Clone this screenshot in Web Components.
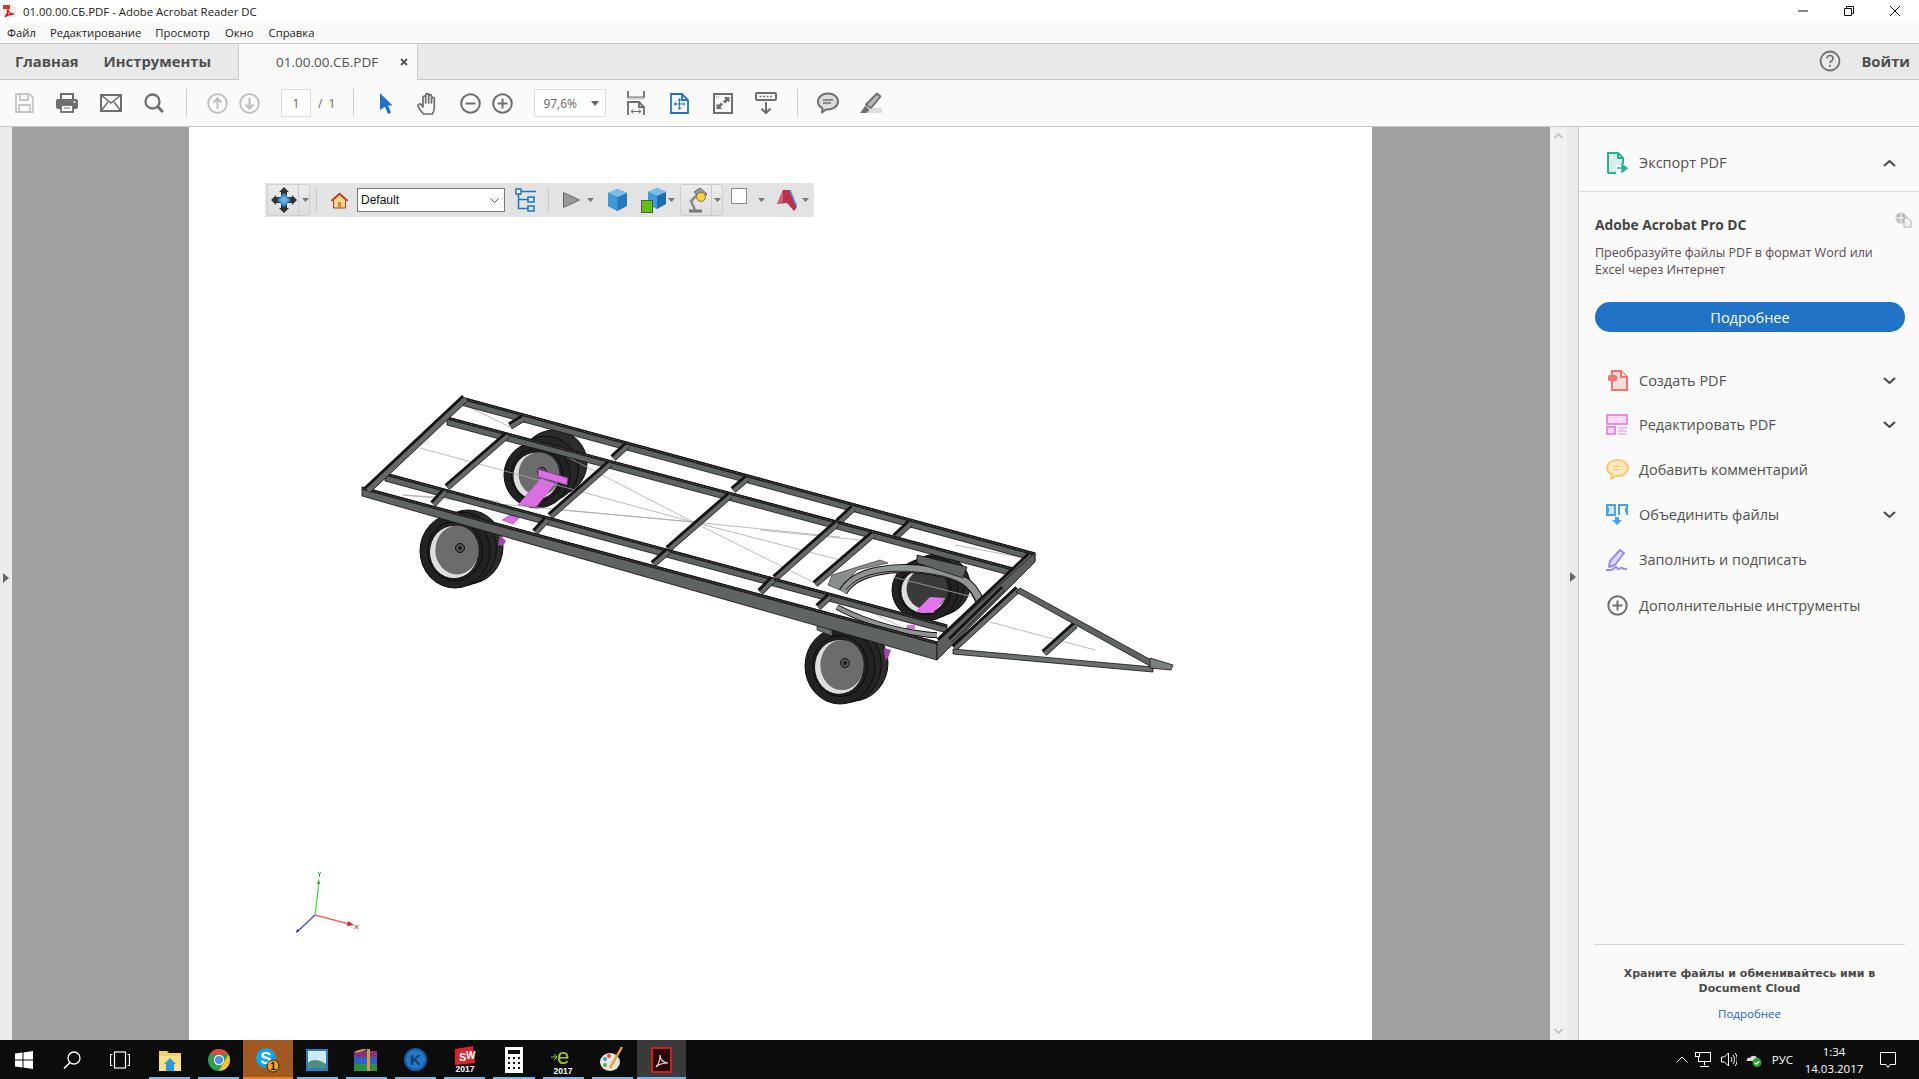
<!DOCTYPE html>
<html lang="ru">
<head>
<meta charset="utf-8">
<title>01.00.00.СБ.PDF - Adobe Acrobat Reader DC</title>
<style>
  html, body { margin: 0; height: 100%; overflow: hidden; }
  body { font-family: "Open Sans", "Noto Sans", sans-serif; color: #4b4b4b; background: #fff; }
  acro-app { width: 1919px; height: 1079px; }
</style>
</head>
<body>
<acro-app></acro-app>
<script>
// small helper, every component is just a template string in a shadow root
function define(name, css, html, init) {
    customElements.define(name, class extends HTMLElement {
        constructor() {
            super();
            this.attachShadow({ mode: 'open' });
            this.shadowRoot.innerHTML = `<style>${css}</style>${typeof html === 'function' ? html(this) : html}`;
            if (init) init(this);
        }
    });
}

define('app-titlebar', `
    :host { display: flex; align-items: center; height: 22px; background: #fff; font-size: 11.400px; color: #222; padding-left: 3px; }
    svg { display: block; }
    .t { margin-left: 7px; flex: 1; }
    .b { width: 46px; display: flex; justify-content: center; }
`, `
    <svg width="13" height="14" viewBox="0 0 13 14"><path d="M0 1h9l4 3v9H0z" fill="#ececec"/><rect x="0" y="1" width="7" height="4" fill="#d0362c"/><path d="M2 13c2-2 3-6 3-8 0 3 2 5 6 5-3 0-7 1-9 3z" fill="none" stroke="#d0201c" stroke-width="1.4"/></svg>
    <span class="t">01.00.00.СБ.PDF - Adobe Acrobat Reader DC</span>
    <span class="b"><svg width="10" height="10"><path d="M0 5h10" stroke="#111"/></svg></span>
    <span class="b"><svg width="10" height="10"><path d="M2.500 2.500V.5h7v7h-2M.5 2.500h7v7h-7z" fill="none" stroke="#111"/></svg></span>
    <span class="b" style="margin-right:1px"><svg width="10" height="10"><path d="M0 0l10 10M10 0L0 10" stroke="#111"/></svg></span>
`);

define('app-menubar', `
    :host { display: flex; align-items: center; gap: 14px; height: 21px; background: #fafafa; font-size: 11.300px; color: #222; padding-left: 7px; box-sizing: border-box; }
`, `<span>Файл</span><span>Редактирование</span><span>Просмотр</span><span style="margin-left:1px">Окно</span><span style="margin-left:1px">Справка</span>`);

define('app-tabs', `
    :host { display: flex; background: #e9e9e9; border-top: 1px solid #c8c8c8; border-bottom: 1px solid #c8c8c8; box-sizing: content-box; height: 35px; font-size: 14.800px; color: #4f4f4f; }
    .nav { display: flex; align-items: center; width: 238px; padding: 0 0 2px 15px; gap: 25px; box-sizing: border-box; font-weight: 700; }
    .tab { display: flex; align-items: center; width: 180px; height: 36px; background: #fafafa; border-left: 1px solid #c8c8c8; border-right: 1px solid #c8c8c8; box-sizing: border-box; padding-left: 37px; font-size: 13.500px; margin-bottom: -1px; color: #505050; }
    .tab svg { margin-left: 22px; }
    .right { margin-left: auto; display: flex; align-items: center; padding: 0 9px 2px 0; gap: 20px; font-weight: 700; }
`, `
    <div class="nav"><span>Главная</span><span>Инструменты</span></div>
    <div class="tab"><span>01.00.00.СБ.PDF</span><svg width="8" height="8"><path d="M1 1l6 6M7 1L1 7" stroke="#555" stroke-width="1.800"/></svg></div>
    <div class="right">
      <svg width="22" height="22" viewBox="0 0 22 22"><circle cx="11" cy="11" r="9.500" fill="none" stroke="#707070" stroke-width="1.800"/><path d="M8 8.500c0-4 6-4 6 0 0 2.500-3 2.500-3 4.500" fill="none" stroke="#707070" stroke-width="1.700"/><circle cx="11" cy="15.800" r="1.100" fill="#707070"/></svg>
      <span>Войти</span>
    </div>
`);

const G = '#6e6e6e';
define('app-toolbar', `
    :host { display: flex; align-items: center; height: 46px; background: #fafafa; border-bottom: 1px solid #c8c8c8; padding-left: 15px; font-size: 12px; color: #666; }
    svg { display: block; flex: none; }
    .sep { width: 1px; height: 28px; background: #cfcfcf; flex: none; }
    .box { display: flex; align-items: center; height: 28px; background: #fff; border: 1px solid #dcdcdc; box-sizing: border-box; flex: none; }
`, `
    <svg width="19" height="20" viewBox="0 0 19 20"><path d="M1 1h13.500L18 4.500V19H1z" fill="none" stroke="#c6c6c6" stroke-width="1.800"/><path d="M5 1v6h8V1M4 19v-7h11v7" fill="none" stroke="#c6c6c6" stroke-width="1.800"/></svg>
    <svg style="margin-left:22px" width="22" height="20" viewBox="0 0 22 20"><path d="M5 7V1h12v6" fill="none" stroke="${G}" stroke-width="2"/><rect y="6" width="22" height="10" rx="2" fill="${G}"/><rect x="5" y="12" width="12" height="7" fill="#fff" stroke="${G}" stroke-width="1.800"/><path d="M8 15h6" stroke="${G}"/><circle cx="18.500" cy="9" r="1" fill="#fff"/></svg>
    <svg style="margin-left:22px" width="22" height="18" viewBox="0 0 22 18"><rect x="1" y="1" width="20" height="16" fill="none" stroke="${G}" stroke-width="2"/><path d="M1 1l10 8 10-8M1 17l7-9M21 17l-7-9" fill="none" stroke="${G}" stroke-width="1.500"/></svg>
    <svg style="margin-left:22px" width="20" height="20" viewBox="0 0 20 20"><circle cx="8.500" cy="8.500" r="7" fill="none" stroke="${G}" stroke-width="2.300"/><path d="M13.500 13.500l5.500 5.500" stroke="${G}" stroke-width="3"/></svg>
    <div class="sep" style="margin-left:22px"></div>
    <svg style="margin-left:20px" width="21" height="21" viewBox="0 0 21 21"><circle cx="10.500" cy="10.500" r="9.300" fill="none" stroke="#bdbdbd" stroke-width="1.800"/><path d="M10.500 16V6M6.500 9.500l4-4 4 4" fill="none" stroke="#bdbdbd" stroke-width="2"/></svg>
    <svg style="margin-left:11px" width="21" height="21" viewBox="0 0 21 21"><circle cx="10.500" cy="10.500" r="9.300" fill="none" stroke="#bdbdbd" stroke-width="1.800"/><path d="M10.500 5v10M6.500 11.500l4 4 4-4" fill="none" stroke="#bdbdbd" stroke-width="2"/></svg>
    <div class="box" style="margin-left:21px;width:30px;justify-content:center;">1</div>
    <span style="margin-left:7px;word-spacing:3px;">/ 1</span>
    <div class="sep" style="margin-left:18px"></div>
    <svg style="margin-left:26px" width="13" height="21" viewBox="0 0 13 21"><path d="M0 0l12.500 12.500H8l3 7-3 1.500-3-7.200L0 17z" fill="#1f72c9"/></svg>
    <svg style="margin-left:24px" width="23" height="23" viewBox="0 0 23 23"><path d="M6.500 22C4.500 19.500 1 15.500 1 13.500c0-1.800 2.200-2 3.200-.7L6 15V5.500c0-2 2.700-2 2.700 0V11 3.200c0-2 3-2 3 0V11 4.200c0-2 2.800-2 2.800 0V11 6.800c0-2 2.800-2 2.800 0V16c0 3-1 4.500-2 6z" fill="#fafafa" stroke="${G}" stroke-width="1.700" stroke-linejoin="round"/></svg>
    <svg style="margin-left:20px" width="21" height="21" viewBox="0 0 21 21"><circle cx="10.500" cy="10.500" r="9.300" fill="none" stroke="${G}" stroke-width="2"/><path d="M5.500 10.500h10" stroke="${G}" stroke-width="2"/></svg>
    <svg style="margin-left:11px" width="21" height="21" viewBox="0 0 21 21"><circle cx="10.500" cy="10.500" r="9.300" fill="none" stroke="${G}" stroke-width="2"/><path d="M5.500 10.500h10M10.500 5.500v10" stroke="${G}" stroke-width="2"/></svg>
    <div class="box" style="margin-left:21px;width:72px;padding-left:8px;gap:14px;">97,6%<svg width="8" height="5"><path d="M0 0h8L4 5z" fill="#666"/></svg></div>
    <svg style="margin-left:21px" width="18" height="24" viewBox="0 0 18 24"><path d="M1 0v6.500h16V0" fill="none" stroke="${G}" stroke-width="1.800"/><path d="M0 7.500h18" stroke="#cfcfcf" stroke-width="2"/><path d="M1 24V11h11l5 5v8M12 11v5h5" fill="none" stroke="${G}" stroke-width="1.800"/><path d="M4 20.500h10M4 20.500l2.500-2M4 20.500l2.500 2M14 20.500l-2.500-2M14 20.500l-2.500 2" stroke="${G}" fill="none"/></svg>
    <svg style="margin-left:25px" width="19" height="21" viewBox="0 0 19 21"><path d="M1 1h11l6 6v13H1zM12 1v6h6" fill="none" stroke="#1f72c9" stroke-width="1.800"/><path d="M9.500 5l2 2.500h-4zM9.500 17l2-2.500h-4zM3.500 11l2.500-2v4zM15.500 11L13 9v4z M9 7h1v8H9zM5 10.500h9v1H5z" fill="#1f72c9"/></svg>
    <svg style="margin-left:24px" width="20" height="21" viewBox="0 0 20 21"><rect x="1" y="1" width="18" height="19" fill="none" stroke="${G}" stroke-width="2"/><path d="M3 4h4" stroke="${G}" stroke-dasharray="1 1"/><path d="M11 4h5.500v5.500l-2-1.500-2.500 2.500-2-2L12.500 6zM9 16H3.500v-5.500l2 1.500L8 9.500l2 2L7.500 14z" fill="${G}"/></svg>
    <svg style="margin-left:22px" width="22" height="23" viewBox="0 0 22 23"><rect x="1" y="1" width="20" height="7" rx="1" fill="none" stroke="${G}" stroke-width="2"/><path d="M4.500 4.500h13" stroke="${G}" stroke-width="1.600" stroke-dasharray="2 1.500"/><path d="M11 10v11M6.500 16.500L11 21l4.500-4.500" fill="none" stroke="${G}" stroke-width="2"/></svg>
    <div class="sep" style="margin-left:20px"></div>
    <svg style="margin-left:19px" width="22" height="22" viewBox="0 0 22 22"><path d="M11 1.500c5.500 0 10 3.300 10 8s-4.500 8-10 8h-2l-4 3 .5-4.200C3 15 1 12.500 1 9.500c0-4.700 4.500-8 10-8z" fill="#dcdcdc" stroke="${G}" stroke-width="2" stroke-linejoin="round"/><path d="M6 8h10M6 11h8" stroke="${G}" stroke-width="1.500"/></svg>
    <svg style="margin-left:21px" width="22" height="22" viewBox="0 0 22 22"><rect x="4" y="16" width="18" height="5" fill="#dcdcdc"/><path d="M17 1.500l3.500 3L11 16l-5-3.500z" fill="#b9b9b9" stroke="${G}" stroke-width="1.800" stroke-linejoin="round"/><path d="M5.500 13.500L0 21h6.500l3-3z" fill="${G}"/></svg>
`);

// 3D toolbar that floats over the page
define('view3d-toolbar', `
    :host { position: absolute; left: 76px; top: 56px; display: flex; align-items: center; width: 549px; height: 34px; background: #e3e3e3; box-sizing: border-box; padding-left: 2px; font: 12px "Liberation Sans", sans-serif; color: #111; }
    svg { display: block; flex: none; }
    .tog { display: flex; align-items: center; height: 32px; border: 1px solid #cdcdcd; border-radius: 3px; background: linear-gradient(#ececec, #dedede); box-sizing: border-box; flex: none; }
    .tog i { width: 1px; height: 30px; background: #cdcdcd; flex: none; }
    .sep { width: 1px; height: 24px; background: #c6c6c6; flex: none; }
    .sel { display: flex; align-items: center; justify-content: space-between; width: 148px; height: 24px; background: #fff; border: 1px solid #777; box-sizing: border-box; padding: 0 5px 0 3px; margin-left: 9px; flex: none; }
`, () => {
    const arr = (m) => `<svg style="margin-left:${m}px" width="7" height="4"><path d="M0 0h7L3.500 4z" fill="#777"/></svg>`;
    return `
    <div class="tog" style="width:43px;padding-left:3px;">
      <svg width="26" height="26" viewBox="0 0 26 26"><path d="M13 0l5 5-2 0v4l-3 3-3-3V5H8z" fill="#333"/><path d="M13 26l5-5h-2v-4l-3-3-3 3v4H8z" fill="#333"/><path d="M0 13l5-5v2h4l3 3-3 3H5v2z" fill="#333"/><path d="M26 13l-5-5v2h-4l-3 3 3 3h4v2z" fill="#333"/><path d="M13 6l7 7-7 7-7-7z" fill="#3b8fd0"/><path d="M13 9l4 4-4 4-4-4z" fill="#6cb5e8"/></svg>
      <i style="margin-left:1px"></i>${arr(3)}
    </div>
    <div class="sep" style="margin-left:6px"></div>
    <svg style="margin-left:14px" width="17" height="17" viewBox="0 0 17 17"><path d="M8.500 1L0 8.500h2.500V16h12V8.500H17z" fill="#f6d488" stroke="#a33a2c" stroke-linejoin="round"/><path d="M8.500 1L0 8.500h2.500l6-5.500 6 5.500H17z" fill="#b8402e"/><rect x="7" y="10" width="3" height="6" fill="#c98a3c"/></svg>
    <div class="sel"><span>Default</span><svg width="9" height="5"><path d="M.5.500l4 4 4-4" fill="none" stroke="#555"/></svg></div>
    <svg style="margin-left:10px" width="22" height="24" viewBox="0 0 22 24" fill="none" stroke="#1f76bd" stroke-width="1.500"><rect x="1" y="1" width="5" height="5" fill="#fff"/><rect x="13" y="9" width="6" height="5" fill="#cfe5f6"/><rect x="13" y="18" width="6" height="5" fill="#cfe5f6"/><path d="M6 3.500h15M3.500 6v14.500H13M3.500 11.500H13"/></svg>
    <div class="sep" style="margin-left:11px"></div>
    <svg style="margin-left:14px" width="17" height="16" viewBox="0 0 17 16"><path d="M.5.500L16.500 8 .5 15.500z" fill="#999" stroke="#666"/></svg>${arr(7)}
    <svg style="margin-left:14px" width="19" height="22" viewBox="0 0 19 22"><path d="M9.500 0L19 4v13l-9.500 5L0 17V4z" fill="#2a78bc"/><path d="M9.500 0L19 4l-9.500 4L0 4z" fill="#7cc0ea"/><path d="M0 4l9.500 4v14L0 17z" fill="#3f9ad8"/></svg>
    <svg style="margin-left:14px" width="25" height="25" viewBox="0 0 25 25"><path d="M16 0l9 4v12l-9 5-9-5V4z" fill="#1f6cae"/><path d="M16 0l9 4-9 4-9-4z" fill="#7cc0ea"/><path d="M7 4l9 4v13l-9-5z" fill="#3f9ad8"/><rect x=".5" y="12.500" width="11" height="12" fill="#66c000" stroke="#555"/></svg>${arr(2)}
    <div class="tog" style="width:43px;margin-left:5px;padding-left:5px;">
      <svg width="22" height="26" viewBox="0 0 22 26"><path d="M3 24h13" stroke="#777" stroke-width="3"/><path d="M9 23L5 14l7-7" fill="none" stroke="#888" stroke-width="2.500"/><path d="M8 5l6-4 7 6-5 5z" fill="#9a9a9a" stroke="#666"/><circle cx="15" cy="10" r="4.500" fill="#f4d24a" stroke="#8b7a20"/></svg>
      <i style="margin-left:3px"></i>${arr(2)}
    </div>
    <svg style="margin-left:8px;align-self:flex-start;margin-top:5px" width="16" height="16"><rect x=".5" y=".5" width="15" height="15" fill="#fff" stroke="#8a8a8a"/></svg>${arr(11)}
    <svg style="margin-left:12px" width="20" height="22" viewBox="0 0 20 22"><path d="M6 1h7l7 17-3 4-7-8-10 1z" fill="#b8324e"/><path d="M0 15L6 1v12z" fill="#d4607a"/><path d="M13 1l7 17" stroke="#4aa3e0" stroke-width="1.500"/></svg>${arr(5)}
    `;
});

// trailer drawing, coordinates are screen pixels traced off the reference
define('trailer-model', `
    :host { position: absolute; inset: 0; display: block; }
    svg { display: block; position: absolute; left: 0; top: 0; }
`, () => {
    const wheel = (cx, cy, rx, ry, dx, dy, noHub) => `
        <ellipse cx="${cx + dx}" cy="${cy + dy}" rx="${rx}" ry="${ry}" fill="#2c2c2c" stroke="#0c0c0c"/>
        <ellipse cx="${cx + dx * .5}" cy="${cy + dy * .5}" rx="${rx}" ry="${ry}" fill="#252525" stroke="#0c0c0c"/>
        <ellipse cx="${cx}" cy="${cy}" rx="${rx}" ry="${ry}" fill="#222" stroke="#0c0c0c"/>
        <ellipse cx="${cx}" cy="${cy}" rx="${rx * .78}" ry="${ry * .8}" fill="none" stroke="#0a0a0a"/>
        <ellipse cx="${cx - 1}" cy="${cy + 1}" rx="${rx * .7}" ry="${ry * .72}" fill="#dedede" stroke="#111"/>
        <ellipse cx="${cx + 2}" cy="${cy - 1}" rx="${rx * .62}" ry="${ry * .66}" fill="${noHub ? '#3a3a3a' : '#6c6c6c'}"/>
        ${noHub ? '' : `<circle cx="${cx + 5}" cy="${cy - 3}" r="4.500" fill="#555" stroke="#111"/><circle cx="${cx + 5}" cy="${cy - 3}" r="2" fill="#222"/>`}`;
    // long rail: dark dotted top edge, grey side face
    const rail = (x1, y1, x2, y2, h1, h2) => `
        <polygon points="${x1},${y1} ${x2},${y2} ${x2},${y2 + (h2 || h1)} ${x1},${y1 + h1}" fill="#5f6361" stroke="#111" stroke-width=".8"/>
        <line x1="${x1}" y1="${y1 + 1}" x2="${x2}" y2="${y2 + 1}" stroke="#171717" stroke-width="3"/>
        <line x1="${x1}" y1="${y1 + 1}" x2="${x2}" y2="${y2 + 1}" stroke="#6f6f6f" stroke-width="1" stroke-dasharray="1 1.500"/>`;
    const cross = (x1, y1, x2, y2, w) => `
        <line x1="${x1}" y1="${y1}" x2="${x2}" y2="${y2}" stroke="#141414" stroke-width="${w + 1.500}"/>
        <line x1="${x1 + .8}" y1="${y1 + .8}" x2="${x2 + .8}" y2="${y2 + .8}" stroke="#656967" stroke-width="${w - 2}"/>`;
    const thin = (p) => p.map(a => `<line x1="${a[0]}" y1="${a[1]}" x2="${a[2]}" y2="${a[3]}"/>`).join('');
    const short1 = [[523,418,510,426],[627,445,613,458],[747,478,733,490],[853,508,838,522],[910,523,895,537]];
    const long = [[507,435,447,487],[610,463,550,516],[730,495,668,549],[837,523,775,578],[873,534,815,584]];
    const short2 = [[445,491,433,504],[547,519,535,532],[668,551,653,564],[773,579,760,592],[830,596,818,607]];
    return `<svg width="1183" height="913" viewBox="189 127 1183 913">
      ${wheel(537, 475, 33, 33, 17, -12)}
      ${wheel(925, 590, 33, 31, 12, -5, true)}
      <polygon points="541,478 555,484 536,507 518,505" fill="#d96fe3" stroke="#a548ae" stroke-width=".6"/>
      <polygon points="538,469 568,478 567,485 538,477" fill="#d96fe3" stroke="#7b3182" stroke-width=".8"/>
      <polygon points="502,520 510,515 520,517 513,524" fill="#d96fe3" stroke="#a548ae" stroke-width=".6"/>
      <polygon points="915,612 930,597 945,598 933,613" fill="#e374ee"/>
      <polygon points="907,625 915,625 915,629 906,629" fill="#d96fe3"/>
      ${wheel(455, 551, 35, 37, 13, -4)}
      <polygon points="500,535 506,541 503,546 498,545" fill="#a844b0"/>
      ${wheel(840, 666, 35, 38, 13, -3)}
      <polygon points="884,648 891,650 888,658 885,660" fill="#a844b0"/>
      <polygon points="832,575 880,560 888,563 857,570 840,590 828,585" fill="#8a8e8c" stroke="#222" stroke-width=".6"/>
      <path d="M843 592C855 570 895 565 933 571S975 590 982 606" fill="none" stroke="#111" stroke-width="9"/>
      <path d="M843 592C855 570 895 565 933 571S975 590 982 606" fill="none" stroke="#8f9392" stroke-width="7"/>
      <path d="M846 590C860 571 895 568 932 574S970 591 979 606" fill="none" stroke="#222" stroke-width="1"/>
      <polygon points="917,555 967,567 963,578 917,563" fill="#5f6361" stroke="#111" stroke-width=".8"/>
      <path d="M837 607C855 617 885 628 910 632S930 635 937 635" fill="none" stroke="#111" stroke-width="6"/>
      <path d="M837 607C855 617 885 628 910 632S930 635 937 635" fill="none" stroke="#8f9392" stroke-width="4"/>
      <polygon points="817,618 832,625 832,636 817,630" fill="#6b6f6d" stroke="#111" stroke-width=".6"/>
      <g stroke="#a9a9a9" stroke-width=".8">${thin([[420,448,693,522],[550,448,693,522],[403,495,693,522],[562,510,693,522],[693,522,840,537],[693,522,840,560],[693,522,813,582],[760,530,860,540],[990,622,1095,650],[853,603,903,628],[893,577,973,597],[465,405,510,427],[403,495,435,497],[460,495,500,502],[955,545,1025,558]])}</g>
      ${rail(461, 397, 1035, 553, 8)}
      ${short1.map(a => cross(...a, 6)).join('')}
      ${rail(447, 417, 1013, 568, 8)}
      ${long.map(a => cross(...a, 6)).join('')}
      ${rail(385, 473, 947, 625, 8)}
      ${short2.map(a => cross(...a, 6)).join('')}
      ${rail(362, 487, 937, 642, 9, 18)}
      ${cross(465, 398, 367, 490, 7)}
      ${cross(1031, 556, 940, 642, 8)}
      <polygon points="937,642 1030,557 1035,553 1035,562 937,660" fill="#5a5e5c" stroke="#111" stroke-width=".8"/>
      ${cross(1018, 589, 954, 648, 6)}
      ${cross(1003, 588, 950, 640, 4)}
      ${cross(1075, 625, 1044, 653, 6)}
      <polygon points="1020,588 1153,661 1150,666 1016,592" fill="#5f6361" stroke="#111" stroke-width=".8"/>
      <polygon points="953,649 1153,667 1153,672 953,654" fill="#6b6f6d" stroke="#111" stroke-width=".8"/>
      <polygon points="1150,658 1173,665 1171,670 1150,668" fill="#7b7f7d" stroke="#111" stroke-width=".8"/>
      <g fill="none" stroke-width="1.300">
        <path d="M315 915L319 882" stroke="#50d050"/>
        <path d="M315 915L298 931" stroke="#4a4ae0"/>
        <path d="M315 915L349 924" stroke="#f06a6a"/>
      </g>
      <path d="M317 884l2-5 1 5z" fill="#10c010"/>
      <path d="M348 921l6 4-7 1z" fill="#e02020"/>
      <path d="M354.500 925l4 4M358.500 925l-4 4" stroke="#e02020"/>
      <path d="M318 872l1.500 2 1.500-2M319.500 874v3" stroke="#20c020" fill="none"/>
      <path d="M296 933l1-4 2.500 2z" fill="#2020d0"/>
    </svg>`;
});

define('pdf-viewport', `
    :host { display: flex; flex: 1; min-width: 0; background: #a0a0a0; }
    .lstrip { width: 12px; background: #ebebeb; display: flex; align-items: center; flex: none; padding-bottom: 12px; box-sizing: border-box; }
    .gutter { width: 177px; flex: none; }
    .page { position: relative; width: 1183px; background: #fff; flex: none; }
    .gutter2 { flex: 1; }
    .scroll { width: 17px; background: #f1f1f1; display: flex; flex-direction: column; justify-content: space-between; align-items: center; padding: 6px 0; box-sizing: border-box; flex: none; }
    svg { display: block; }
`, `
    <div class="lstrip"><svg width="6" height="10" style="margin-left:3px"><path d="M0 0l6 5-6 5z" fill="#666"/></svg></div>
    <div class="gutter"></div>
    <div class="page"><trailer-model></trailer-model><view3d-toolbar></view3d-toolbar></div>
    <div class="gutter2"></div>
    <div class="scroll">
      <svg width="9" height="6"><path d="M.5 5l4-4 4 4" fill="none" stroke="#bdbdbd" stroke-width="1.600"/></svg>
      <svg width="9" height="6"><path d="M.5 1l4 4 4-4" fill="none" stroke="#bdbdbd" stroke-width="1.600"/></svg>
    </div>
`);

define('tool-row', `
    :host { display: flex; align-items: center; height: var(--h, 45px); padding: var(--pt, 0) 0 0 26px; font-size: 14.500px; color: #505050; box-sizing: border-box; flex: none; }
    .ic { width: 34px; flex: none; }
    .ic div { width: 24px; display: flex; justify-content: center; }
    .lbl { flex: 1; }
    svg { display: block; }
    .chev { margin-right: 23px; }
`, (el) => {
    const c = el.getAttribute('chev');
    const d = c === 'up' ? 'M1 7l5.500-5 5.500 5' : 'M1 1l5.500 5 5.500-5';
    return `<div class="ic"><div><slot name="icon"></slot></div></div><div class="lbl"><slot></slot></div>` +
        (c ? `<svg class="chev" width="13" height="8"><path d="${d}" fill="none" stroke="#444" stroke-width="2"/></svg>` : '');
});

define('tools-panel', `
    :host { display: flex; flex-direction: column; width: 341px; flex: none; background: #fafafa; border-left: 1px solid #c8c8c8; box-sizing: border-box; }
    svg { display: block; }
    .export { --h: 65px; --pt: 7px; border-bottom: 1px solid #dcdcdc; }
    .promo { padding: 24px 14px 0 16px; height: 166px; box-sizing: border-box; position: relative; flex: none; }
    h4 { margin: 0; font-size: 13.800px; line-height: 17px; color: #444; font-weight: 700; }
    p { margin: 11px 0 0; font-size: 12.500px; line-height: 17px; color: #5a4a54; }
    .cloudic { position: absolute; right: 7px; top: 20px; }
    .btn { margin-top: 24px; height: 30px; border-radius: 15px; background: #2173c8; color: #fff; font-size: 14.500px; display: flex; align-items: center; justify-content: center; }
    .spacer { flex: 1; }
    .foot { margin: 0 14px 0 15px; border-top: 1px solid #d4d4d4; height: 96px; text-align: center; box-sizing: border-box; padding-top: 21px; }
    .foot b { display: block; font: 700 11px/15px "DejaVu Sans", "Liberation Sans", sans-serif; color: #4a4a4a; }
    .foot a { display: block; margin-top: 10px; font-size: 11.500px; color: #2a5fc0; }
`, `
    <tool-row class="export" chev="up"><svg slot="icon" width="21" height="22" viewBox="0 0 21 22"><path d="M1 1h10l5 5v7H9v8H1z" fill="#d8efe9"/><path d="M1 21V1h10l5 5v6M11 1v5h5M1 21h8" fill="none" stroke="#2fb08f" stroke-width="2"/><path d="M10 16h7M15 12.500l5 3.700-5 3.700z" fill="#2fb08f" stroke="#2fb08f" stroke-width="1.500"/></svg>Экспорт PDF</tool-row>
    <div class="promo">
      <h4>Adobe Acrobat Pro DC</h4>
      <svg class="cloudic" width="17" height="16" viewBox="0 0 17 16"><circle cx="6" cy="6" r="5.500" fill="#bdbdbd"/><path d="M1 6h10M6 1v10" stroke="#fafafa"/><path d="M9 6h4l3 3v6H9z" fill="#f4f4f4" stroke="#aaa"/></svg>
      <p>Преобразуйте файлы PDF в формат Word или Excel через Интернет</p>
      <div class="btn">Подробнее</div>
    </div>
    <tool-row chev="down"><svg slot="icon" width="21" height="21" viewBox="0 0 21 21"><path d="M5 1h9l6 6v13H5z" fill="#fbdedb" stroke="#f0756e" stroke-width="2"/><path d="M14 1v6h6" fill="#fff" stroke="#f0756e" stroke-width="2"/><rect x="1" y="5" width="9" height="6" rx="1.500" fill="#f0756e"/></svg>Создать PDF</tool-row>
    <tool-row chev="down" style="--h:43px"><svg slot="icon" width="22" height="21" viewBox="0 0 22 21"><rect x="1" y="1" width="20" height="9" fill="#fadcf5" stroke="#ee82dc" stroke-width="1.800"/><rect x="1" y="13" width="8" height="7" fill="#fadcf5" stroke="#ee82dc" stroke-width="1.800"/><path d="M12 14h9M12 17h9M12 20h9" stroke="#ee82dc" stroke-width="1.200"/></svg>Редактировать PDF</tool-row>
    <tool-row style="--h:46px"><svg slot="icon" width="23" height="21" viewBox="0 0 23 21"><path d="M11.500 1C17.500 1 22 4.500 22 9s-4.500 8-10.500 8H10l-5 3 1-4.500C3 14 1 11.700 1 9c0-4.500 4.500-8 10.500-8z" fill="#fdebc8" stroke="#fcc96b" stroke-width="2" stroke-linejoin="round"/><path d="M7 7.500h9M7 10.500h7" stroke="#fcc96b" stroke-width="1.200"/></svg>Добавить комментарий</tool-row>
    <tool-row chev="down"><svg slot="icon" width="24" height="23" viewBox="0 0 24 23"><path d="M2 12V2h8v10H2z" fill="#cfe6f8" stroke="#4aa3e6" stroke-width="2"/><path d="M14 12V2h8v10" fill="none" stroke="#4aa3e6" stroke-width="2"/><path d="M1 7l3-3v6zM23 7l-3-3v6z" fill="#4aa3e6"/><path d="M10 14h4v3h3l-5 5-5-5h3z" fill="#4aa3e6"/></svg>Объединить файлы</tool-row>
    <tool-row><svg slot="icon" width="24" height="22" viewBox="0 0 24 22"><path d="M15 1l4 3-9 12-6 2 1-6z" fill="#e1dcfd" stroke="#9b8cf5" stroke-width="2" stroke-linejoin="round"/><path d="M1 21h5c3 0 3-3 5-3s1 3 3 2 2-2 3-1 2 1 5 1" fill="none" stroke="#9b8cf5" stroke-width="2"/></svg>Заполнить и подписать</tool-row>
    <tool-row style="--h:47px"><svg slot="icon" width="21" height="21" viewBox="0 0 21 21"><circle cx="10.500" cy="10.500" r="9.200" fill="none" stroke="#707070" stroke-width="2"/><path d="M5.500 10.500h10M10.500 5.500v10" stroke="#707070" stroke-width="2"/></svg>Дополнительные инструменты</tool-row>
    <div class="spacer"></div>
    <div class="foot"><b>Храните файлы и обменивайтесь ими в Document Cloud</b><a>Подробнее</a></div>
`);

define('task-icon', `
    :host { position: relative; display: flex; align-items: center; justify-content: center; width: 49.200px; height: 39px; flex: none; box-sizing: border-box; }
    :host([run])::after { content: ""; position: absolute; left: 4px; right: 4px; bottom: 0; height: 2px; background: #76b9ed; }
    :host([hot]) { background: #a05a20; }
    :host([hot])::after { left: 0; right: 0; background: #f08020; }
    :host([act]) { background: #3a3a3a; }
    :host([act])::after { left: 0; right: 0; }
`, `<slot></slot>`);

define('task-bar', `
    :host { display: flex; align-items: center; height: 39px; background: #0c0c0c; color: #fff; font-size: 11.500px; position: relative; }
    svg { display: block; }
    .tray { margin-left: auto; display: flex; align-items: center; height: 39px; }
    .clock { display: flex; flex-direction: column; align-items: center; line-height: 17px; width: 60px; margin-left: 11px; }
    text { font-family: "Liberation Sans", sans-serif; }
`, `
    <task-icon style="width:48px"><svg width="18" height="18" viewBox="0 0 18 18"><path d="M0 2.600l7.500-1V8.500H0zM8.500 1.400L18 0v8.500H8.500zM0 9.500h7.500v7l-7.500-1zM8.500 9.500H18V18l-9.500-1.400z" fill="#fff"/></svg></task-icon>
    <task-icon style="width:47px"><svg width="18" height="18" viewBox="0 0 18 18"><circle cx="11" cy="7" r="6" fill="none" stroke="#fff" stroke-width="1.300"/><path d="M7 11.500L1 17.500" stroke="#fff" stroke-width="1.600"/></svg></task-icon>
    <task-icon style="width:50px"><svg width="20" height="18" viewBox="0 0 20 18" fill="none" stroke="#fff" stroke-width="1.200"><rect x="4.500" y="1" width="11" height="16"/><path d="M2.500 3.500H.5v11h2M17.500 3.500h2v11h-2"/></svg></task-icon>
    <task-icon run><svg width="22" height="22" viewBox="0 0 22 22"><path d="M0 2h8l2 2h12v18H0z" fill="#f4cf6a"/><path d="M0 7h22v15H0z" fill="#f9e08c"/><path d="M11 9l6 6h-2v7H7v-7H5z" fill="#2d9ad8"/></svg></task-icon>
    <task-icon run><svg width="22" height="22" viewBox="-11 -11 22 22"><circle r="11" fill="#2fa04a"/><path d="M-9.500-5.500A11 11 0 0 1 9.500-5.500H0z" fill="#dd4b3e"/><path d="M9.500-5.500A11 11 0 0 1 0 11L5 2z" fill="#f7c32e"/><circle r="5.200" fill="#fff"/><circle r="4" fill="#4d8fe8"/></svg></task-icon>
    <task-icon run hot><svg width="24" height="26" viewBox="0 0 24 26"><circle cx="10" cy="11" r="10" fill="#12a5e8"/><text x="10" y="17" text-anchor="middle" font-size="17" font-weight="700" fill="#fff">S</text><circle cx="17" cy="19" r="6" fill="#f9a51a" stroke="#222"/><text x="17" y="23" text-anchor="middle" font-size="10" font-weight="700" fill="#111">1</text></svg></task-icon>
    <task-icon run><svg width="22" height="22" viewBox="0 0 22 22"><rect width="22" height="22" fill="#2a7cc0"/><rect x="2" y="2" width="18" height="17" fill="#cfe8f4"/><path d="M2 14c5-5 11-3 18 1v4H2z" fill="#4f8f7a"/></svg></task-icon>
    <task-icon run><svg width="24" height="22" viewBox="0 0 24 22"><rect y="2" width="23" height="6" fill="#8a2f7a"/><rect y="8" width="23" height="7" fill="#3060c0"/><rect y="15" width="23" height="7" fill="#2f8f40"/><rect x="13" width="3" height="22" fill="#c9a050"/><path d="M2 3l10-3" stroke="#c9a050" stroke-width="2"/></svg></task-icon>
    <task-icon run><svg width="23" height="23" viewBox="0 0 23 23"><circle cx="11.500" cy="11.500" r="10.500" fill="#2478c8" stroke="#155a9c" stroke-width="2"/><text x="11.500" y="17" text-anchor="middle" font-size="15" font-weight="700" fill="#0e3f70">K</text></svg></task-icon>
    <task-icon run><svg width="24" height="28" viewBox="0 0 24 28"><path d="M2 3l18-3 2 17-20 2z" fill="#d8262c"/><text x="6" y="15" font-size="11" font-weight="700" fill="#fff">S</text><text x="13" y="13" font-size="10" font-weight="700" fill="#fff">W</text><text x="12" y="26" text-anchor="middle" font-size="8.500" font-weight="700" fill="#fff">2017</text></svg></task-icon>
    <task-icon run><svg width="18" height="26" viewBox="0 0 18 26"><rect width="18" height="26" fill="#fff"/><rect x="3" y="3" width="12" height="4" fill="#111"/><path d="M3 11h2M8 11h2M13 11h2M3 16h2M8 16h2M13 16h2M3 21h2M8 21h2M13 21h2" stroke="#111" stroke-width="2"/></svg></task-icon>
    <task-icon run><svg width="24" height="36" viewBox="0 -6 24 36"><text x="6" y="16" font-size="22" fill="#9bd020">e</text><path d="M0 9h6M3 6l3 3-3 3" stroke="#9bd020" fill="none"/><text x="12" y="26" text-anchor="middle" font-size="8.500" font-weight="700" fill="#fff">2017</text></svg></task-icon>
    <task-icon run><svg width="24" height="25" viewBox="0 0 24 25"><ellipse cx="10" cy="15" rx="10" ry="9" fill="#e8e8d8"/><circle cx="5" cy="12" r="2" fill="#3a9ad8"/><circle cx="9" cy="9" r="2" fill="#e04a3a"/><circle cx="5" cy="18" r="2" fill="#4ab04a"/><path d="M10 21L22 0" stroke="#e0a040" stroke-width="2.500"/></svg></task-icon>
    <task-icon run act><svg width="21" height="26" viewBox="0 0 21 26"><rect x="1" y="1" width="19" height="24" fill="#2a0808" stroke="#e01e1e" stroke-width="1.800"/><path d="M5 20c3-3 4-9 4-12 0 4 3 8 8 8-4 0-9 1-12 4z" fill="none" stroke="#e8d8d8" stroke-width="1.200"/></svg></task-icon>
    <div class="tray">
      <svg width="12" height="7"><path d="M.5 6.500L6 1l5.500 5.500" fill="none" stroke="#fff"/></svg>
      <svg style="margin-left:7px" width="16" height="15" viewBox="0 0 16 15" fill="none" stroke="#fff"><rect x="3.500" y=".5" width="12" height="9"/><rect x=".5" y=".5" width="4" height="4" fill="#0c0c0c"/><path d="M9.500 9.500v4M5 14.500h9"/></svg>
      <svg style="margin-left:10px" width="16" height="15" viewBox="0 0 16 15" fill="none" stroke="#fff"><path d="M.5 5h3L7.500 1v13l-4-4h-3z"/><path d="M10 5c1 1.500 1 3.500 0 5M12 3c2 2.500 2 6.500 0 9M14 1c3 3.500 3 9.500 0 13"/></svg>
      <svg style="margin-left:9px" width="16" height="15" viewBox="0 0 16 15"><path d="M1 9c-1-2 1-4 3-3 1-3 6-3 7 0 2 0 3 2 2 3z" fill="#dcdcdc"/><circle cx="11" cy="10.500" r="4.500" fill="#2da02d"/><path d="M8.800 10.500l1.600 1.600 2.800-2.800" fill="none" stroke="#fff" stroke-width="1.200"/></svg>
      <span style="margin-left:10px">РУС</span>
      <div class="clock"><span>1:34</span><span>14.03.2017</span></div>
      <svg style="margin:0 23px 0 16px" width="16" height="16" viewBox="0 0 16 16"><path d="M.5.500h15v12H10l-2 3-2-3H.5z" fill="none" stroke="#fff"/></svg>
    </div>
`);

define('acro-app', `
    :host { display: flex; flex-direction: column; width: 1919px; height: 1079px; overflow: hidden; }
    .main { display: flex; flex: 1; min-height: 0; }
    .mid { width: 11px; background: #ebebeb; display: flex; align-items: center; flex: none; padding-bottom: 14px; box-sizing: border-box; }
    svg { display: block; }
`, `
    <app-titlebar></app-titlebar>
    <app-menubar></app-menubar>
    <app-tabs></app-tabs>
    <app-toolbar></app-toolbar>
    <div class="main">
      <pdf-viewport></pdf-viewport>
      <div class="mid"><svg width="6" height="10" style="margin-left:3px"><path d="M0 0l6 5-6 5z" fill="#666"/></svg></div>
      <tools-panel></tools-panel>
    </div>
    <task-bar></task-bar>
`);
</script>
</body>
</html>
